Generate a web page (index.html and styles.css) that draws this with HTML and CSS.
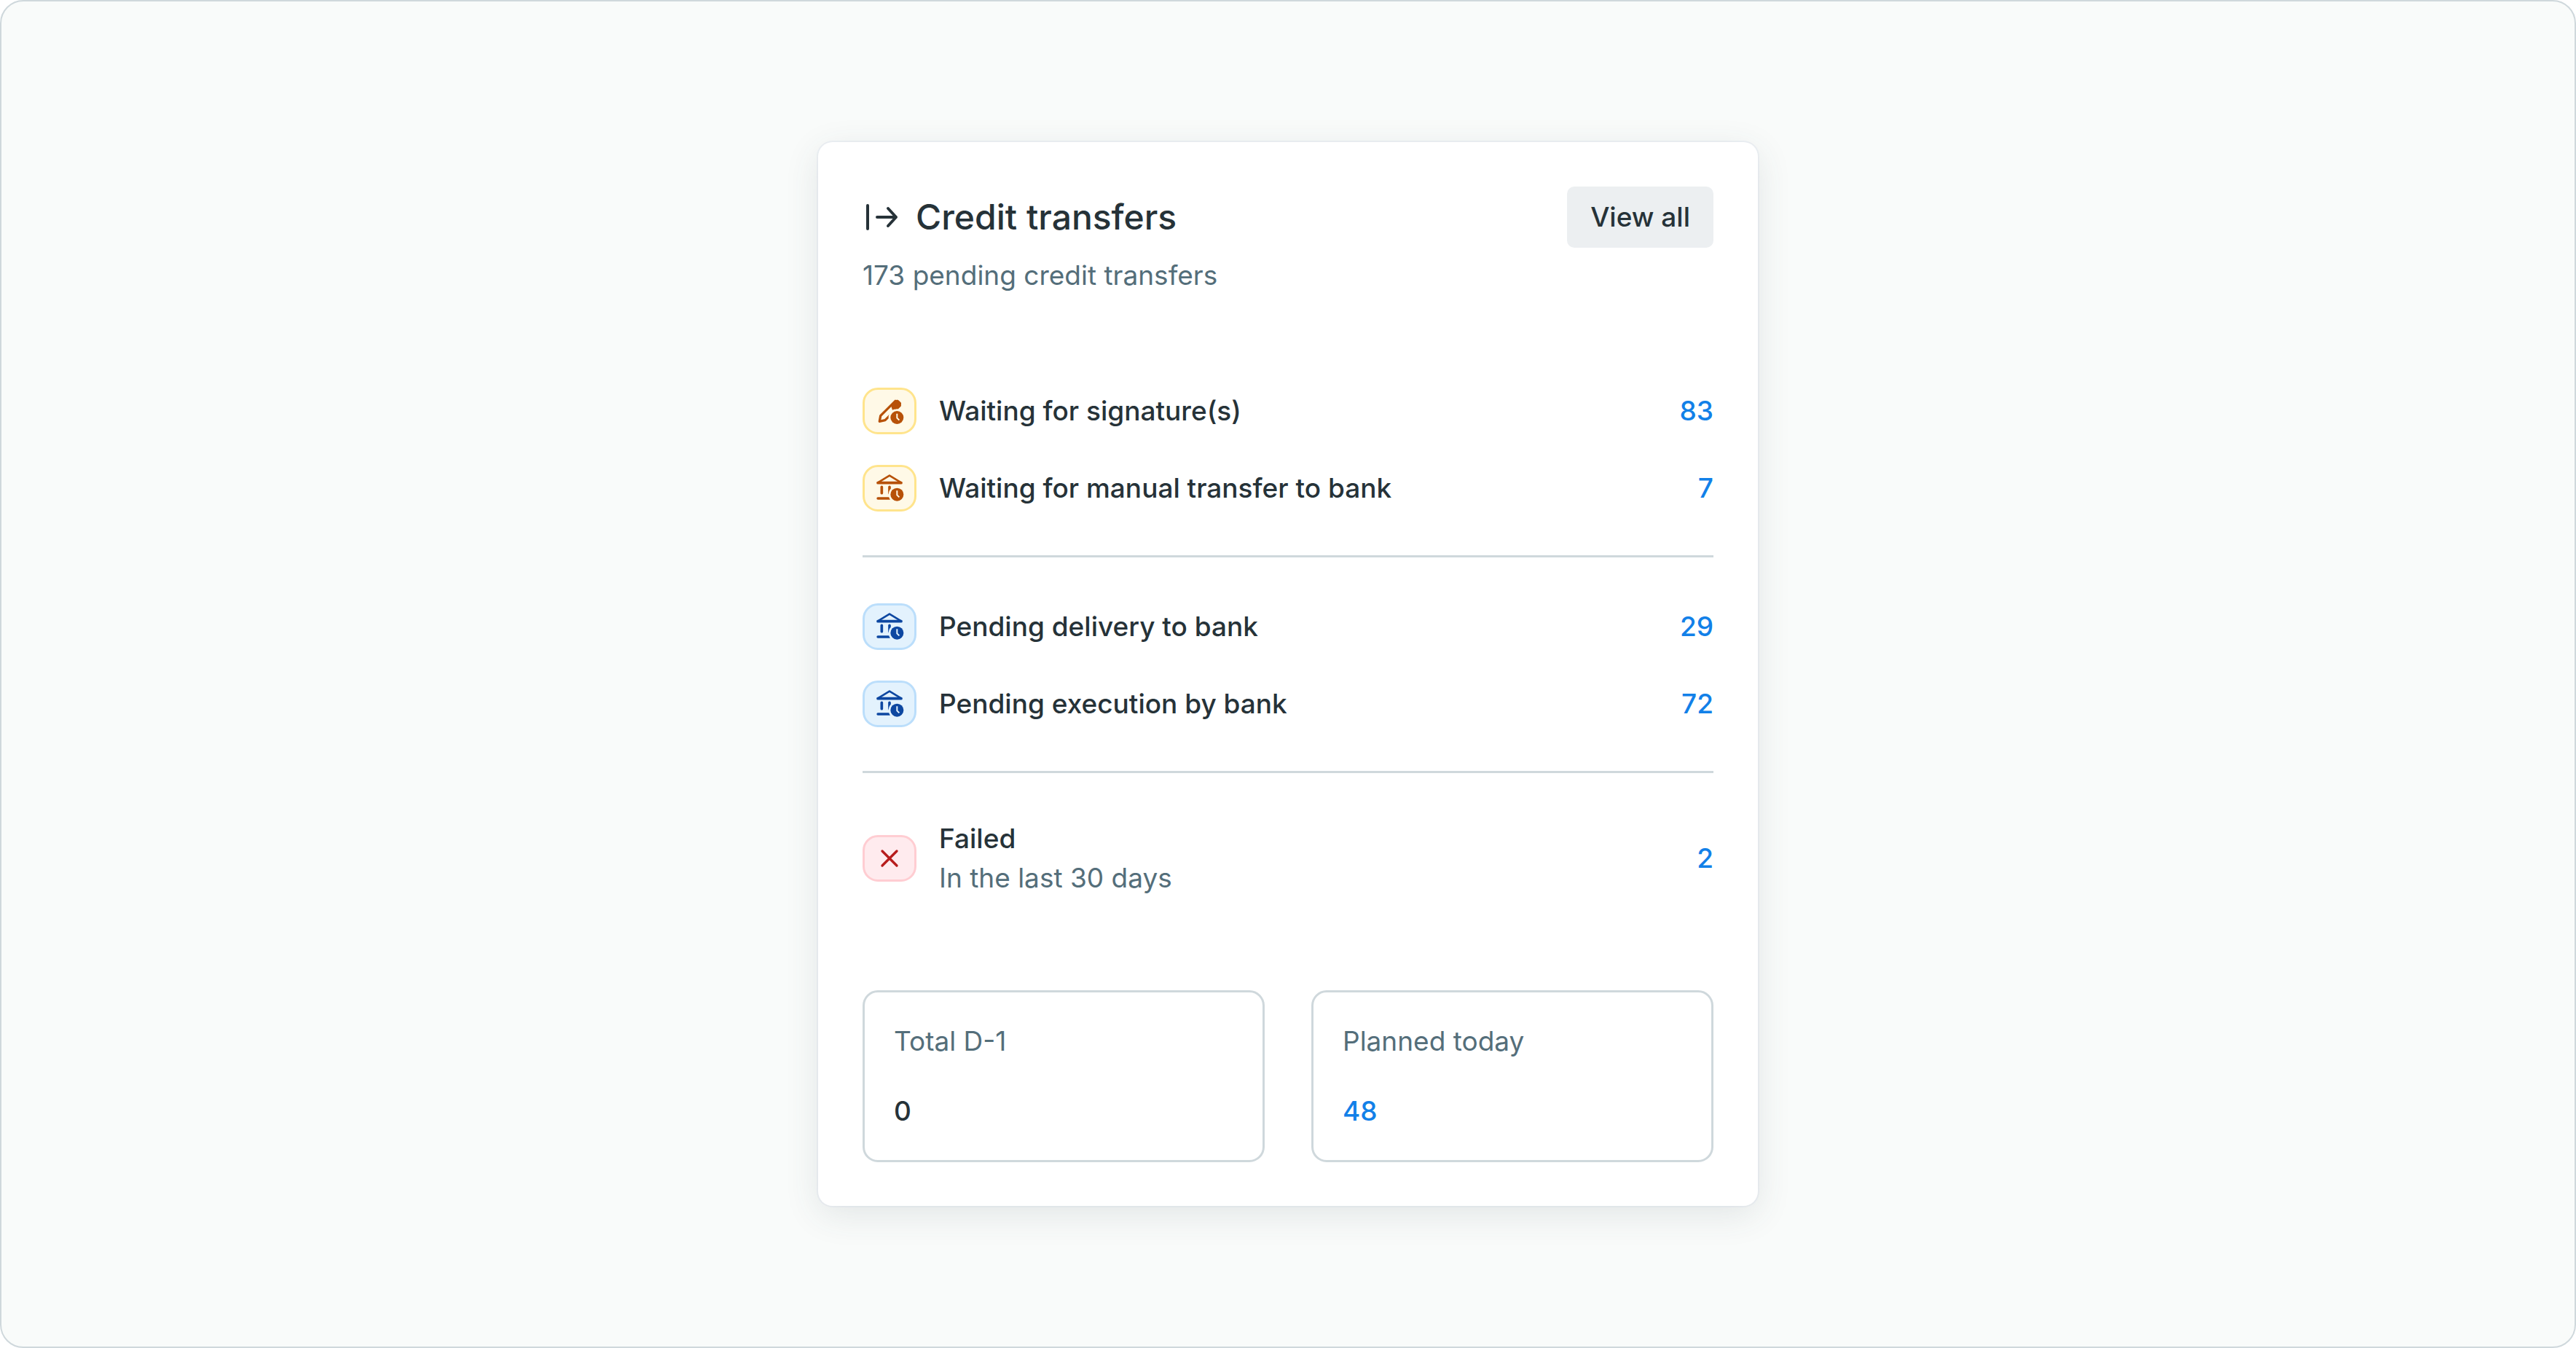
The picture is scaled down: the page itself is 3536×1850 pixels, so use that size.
FILE: index.html
```html
<!DOCTYPE html>
<html lang="en">
<head>
<meta charset="utf-8">
<meta name="viewport" content="width=device-width, initial-scale=1">
<title>Credit transfers</title>
<link rel="stylesheet" href="styles.css">
</head>
<body>
<svg class="sprite" aria-hidden="true">
  <symbol id="bank-clock" viewBox="0 0 126 126">
    <path class="stroke" stroke-width="8" d="M15 40 63 11l48 29z"/>
    <path class="stroke" stroke-width="11" d="M15 41h96M31 58v25M63 58v25"/>
    <path class="stroke" stroke-width="10" d="M15 105h60"/>
    <circle class="cutout" cx="94" cy="89" r="35"/>
    <circle class="solid" cx="94" cy="89" r="27"/>
    <path class="hands" d="M94 73v18l9 9"/>
  </symbol>
  <symbol id="pen-clock" viewBox="0 0 126 126">
    <path class="stroke" stroke-width="10" d="M22 106l4-23L87 22l19 19-61 60z"/>
    <path class="solid" d="M69 41 88 20q6-6 13 0l7 7q6 6 0 13L90 62z"/>
    <circle class="cutout" cx="94" cy="90" r="35"/>
    <path class="solid" d="M69 41 88 20q6-6 13 0l7 7q6 6 0 13L96 54q-12-1-21 5z"/>
    <circle class="solid" cx="94" cy="90" r="27"/>
    <path class="hands" d="M94 74v18l9 9"/>
  </symbol>
</svg>
<main class="stage">
  <section class="card" aria-labelledby="card-title">
    <header class="header">
      <div class="heading">
        <svg class="heading-icon" viewBox="0 0 52 52" aria-hidden="true"><path d="M7 10v32M20 26h26M35 14l11 12-11 12"/></svg>
        <h1 class="title" id="card-title">Credit transfers</h1>
        <button class="button" type="button">View all</button>
      </div>
      <p class="muted">173 pending credit transfers</p>
    </header>

    <div class="groups">
      <ul class="group">
        <li class="row">
          <span class="chip chip-warning"><svg class="icon" aria-hidden="true"><use href="#pen-clock"/></svg></span>
          <span class="label">Waiting for signature(s)</span>
          <a class="count" href="#signature">83</a>
        </li>
        <li class="row">
          <span class="chip chip-warning"><svg class="icon" aria-hidden="true"><use href="#bank-clock"/></svg></span>
          <span class="label">Waiting for manual transfer to bank</span>
          <a class="count" href="#manual">7</a>
        </li>
      </ul>
      <ul class="group">
        <li class="row">
          <span class="chip chip-info"><svg class="icon" aria-hidden="true"><use href="#bank-clock"/></svg></span>
          <span class="label">Pending delivery to bank</span>
          <a class="count" href="#delivery">29</a>
        </li>
        <li class="row">
          <span class="chip chip-info"><svg class="icon" aria-hidden="true"><use href="#bank-clock"/></svg></span>
          <span class="label">Pending execution by bank</span>
          <a class="count" href="#execution">72</a>
        </li>
      </ul>
      <ul class="group">
        <li class="row">
          <span class="chip chip-error"><svg class="icon" viewBox="0 0 126 126" aria-hidden="true"><path class="stroke" stroke-width="10" d="M33 33l60 60M93 33 33 93"/></svg></span>
          <div class="label">
            <p>Failed</p>
            <p class="muted">In the last 30 days</p>
          </div>
          <a class="count" href="#failed">2</a>
        </li>
      </ul>
    </div>

    <dl class="tiles">
      <div class="tile">
        <dt class="muted">Total D-1</dt>
        <dd class="value">0</dd>
      </div>
      <div class="tile">
        <dt class="muted">Planned today</dt>
        <dd class="value"><a class="count" href="#planned">48</a></dd>
      </div>
    </dl>
  </section>
</main>
</body>
</html>
```
FILE: styles.css
```css
*,
*::before,
*::after {
  box-sizing: border-box;
}

body,
h1,
p,
ul,
dl,
dd {
  margin: 0;
  padding: 0;
}

body {
  background: #fff;
  color: #263238;
  font: 500 37px/54px Inter, "Liberation Sans", sans-serif;
}

.sprite {
  display: none;
}

.stage {
  display: flex;
  align-items: center;
  justify-content: center;
  min-height: 100vh;
  padding: 40px;
  background: #f9fbfa;
  border: 2px solid #cfd8dc;
  border-radius: 32px;
}

.card {
  width: 100%;
  max-width: 1290px;
  padding: 61px 61px 60px;
  background: #fff;
  border-radius: 20px;
  box-shadow: 0 0 0 2px rgba(207, 216, 228, 0.3), 0 12px 48px rgba(55, 71, 79, 0.12);
}

.header {
  display: flex;
  flex-direction: column;
  gap: 11px;
}

.heading {
  display: flex;
  align-items: center;
}

.heading-icon {
  flex: none;
  width: 52px;
  height: 52px;
  margin-right: 21px;
  fill: none;
  stroke: #263238;
  stroke-width: 4;
  stroke-linecap: round;
  stroke-linejoin: round;
}

.title {
  flex: 1;
  font-size: 48px;
  font-weight: 500;
  line-height: 64px;
}

.button {
  height: 84px;
  padding: 0 32px;
  border: 0;
  border-radius: 10px;
  background: #eceff1;
  color: inherit;
  font: inherit;
  cursor: pointer;
}

.muted {
  color: #546e7a;
  font-weight: 400;
}

.groups {
  margin: 127px 0;
}

.group {
  display: flex;
  flex-direction: column;
  gap: 42px;
  list-style: none;
}

.group + .group {
  margin-top: 60px;
  padding-top: 63px;
  border-top: 3px solid #cfd8dc;
}

.row {
  display: flex;
  align-items: center;
  gap: 31px;
}

.label {
  flex: 1;
}

.chip {
  display: flex;
  flex: none;
  align-items: center;
  justify-content: center;
  width: 74px;
  height: 64px;
  border: 3px solid var(--edge);
  border-radius: 21px;
  background: var(--fill);
}

.chip-warning {
  --fill: #fff9e7;
  --edge: #ffe48c;
  --ink: #b75108;
}

.chip-info {
  --fill: #e3f2fd;
  --edge: #bbdefb;
  --ink: #0d47a1;
}

.chip-error {
  --fill: #ffebee;
  --edge: #ffcdd2;
  --ink: #b71c1c;
}

.icon {
  width: 42px;
  height: 42px;
}

.stroke {
  fill: none;
  stroke: var(--ink);
  stroke-linecap: round;
  stroke-linejoin: round;
}

.solid {
  fill: var(--ink);
}

.cutout {
  fill: var(--fill);
}

.hands {
  fill: none;
  stroke: var(--fill);
  stroke-width: 6;
}

.count {
  color: #1280e8;
  text-decoration: none;
}

.tiles {
  display: grid;
  grid-template-columns: 1fr 1fr;
  gap: 64px;
}

.tile {
  display: flex;
  flex-direction: column;
  gap: 42px;
  padding: 40px;
  border: 3px solid #cfd8dc;
  border-radius: 21px;
}
```
